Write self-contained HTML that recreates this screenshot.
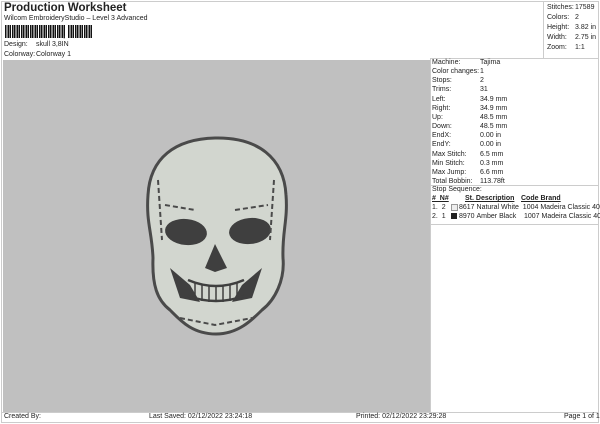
<!DOCTYPE html>
<html><head><style>
body{margin:0;width:600px;height:424px;background:#fff;font-family:"Liberation Sans",sans-serif;position:relative;overflow:hidden;color:#222}
.a{position:absolute;font-size:7px;white-space:nowrap}
.bd{position:absolute;border:1px solid #ccc}
</style></head><body>
<div class="bd" style="left:1px;top:1px;width:596px;height:420px"></div>
<div class="a" style="left:4px;top:2px;font-size:11.5px;font-weight:bold">Production Worksheet</div>
<div class="a" style="left:4px;top:15px">Wilcom EmbroideryStudio – Level 3 Advanced</div>
<div style="position:absolute;left:5px;top:25px;width:60px;height:13px;background:repeating-linear-gradient(90deg,#111 0 1.5px,#fff 1.5px 2.5px,#111 2.5px 4px,#fff 4px 4.5px)"></div>
<div class="a" style="left:63px;top:29px;font-weight:bold;font-size:9px">,</div>
<div style="position:absolute;left:68px;top:25px;width:25px;height:13px;background:repeating-linear-gradient(90deg,#111 0 1.5px,#fff 1.5px 2.5px,#111 2.5px 4px,#fff 4px 4.5px)"></div>
<div class="a" style="left:4px;top:41px">Design:</div><div class="a" style="left:36px;top:41px">skull 3,8IN</div>
<div class="a" style="left:4px;top:51px">Colorway:</div><div class="a" style="left:36px;top:51px">Colorway 1</div>
<div class="bd" style="left:543px;top:1px;width:54px;height:57px;border-top:none;border-right:none"></div>
<div class="a" style="left:547px;top:3px;line-height:10px">Stitches:<br>Colors:<br>Height:<br>Width:<br>Zoom:</div>
<div class="a" style="left:575px;top:3px;line-height:10px">17589<br>2<br>3.82 in<br>2.75 in<br>1:1</div>
<div style="position:absolute;left:3px;top:60px;width:427px;height:353px;background:#c0c0c0"></div>
<div class="bd" style="left:430px;top:58px;width:167px;height:355px;border-right:none;border-bottom:none"></div>
<div class="a" style="left:432px;top:58px;line-height:9.15px">Machine:<br>Color changes:<br>Stops:<br>Trims:<br>Left:<br>Right:<br>Up:<br>Down:<br>EndX:<br>EndY:<br>Max Stitch:<br>Min Stitch:<br>Max Jump:<br>Total Bobbin:</div>
<div class="a" style="left:480px;top:58px;line-height:9.15px">Tajima<br>1<br>2<br>31<br>34.9 mm<br>34.9 mm<br>48.5 mm<br>48.5 mm<br>0.00 in<br>0.00 in<br>6.5 mm<br>0.3 mm<br>6.6 mm<br>113.78ft</div>
<div style="position:absolute;left:430px;top:185px;width:168px;border-top:1px solid #ccc"></div>
<div class="a" style="left:432px;top:186px">Stop Sequence:</div>
<div class="a" style="left:432px;top:195px;font-weight:bold;text-decoration:underline">#&nbsp;&nbsp;N#</div>
<div class="a" style="left:465px;top:195px;font-weight:bold;text-decoration:underline">St.&nbsp;Description</div>
<div class="a" style="left:521px;top:195px;font-weight:bold;text-decoration:underline">Code&nbsp;Brand</div>
<div class="a" style="left:432px;top:204px">1.&nbsp;&nbsp;2</div><div style="position:absolute;left:451px;top:204px;width:5px;height:5px;border:1px solid #999;background:#eee"></div>
<div class="a" style="left:459px;top:204px">8617&nbsp;Natural White&nbsp;&nbsp;1004&nbsp;Madeira Classic 40</div>
<div class="a" style="left:432px;top:213px">2.&nbsp;&nbsp;1</div><div style="position:absolute;left:451px;top:213px;width:6px;height:6px;background:#222"></div>
<div class="a" style="left:459px;top:213px">8970&nbsp;Amber Black&nbsp;&nbsp;&nbsp;&nbsp;1007&nbsp;Madeira Classic 40</div>
<div style="position:absolute;left:430px;top:224px;width:168px;border-top:1px solid #ccc"></div>
<div style="position:absolute;left:1px;top:412px;width:597px;border-top:1px solid #ccc"></div>
<div class="a" style="left:4px;top:413px">Created By:</div>
<div class="a" style="left:149px;top:413px">Last Saved: 02/12/2022 23:24:18</div>
<div class="a" style="left:356px;top:413px">Printed: 02/12/2022 23:29:28</div>
<div class="a" style="left:564px;top:413px">Page 1 of 1</div>
<svg style="position:absolute;left:0;top:0" width="600" height="424">
<path d="M215 138 C258 137 284 158 286 195 C288 220 282 232 283 258 C285 280 275 300 262 310 C252 320 238 334 216 334 C192 334 180 320 170 310 C157 300 152 285 153 258 C152 232 146 222 148 195 C150 158 175 139 215 138Z" fill="#d2d6cf" stroke="#4a4a4a" stroke-width="3"/>
<ellipse cx="186" cy="232" rx="21" ry="13" fill="#3f3f3f" transform="rotate(6 186 232)"/>
<ellipse cx="250" cy="231" rx="21" ry="13" fill="#3f3f3f" transform="rotate(-6 250 231)"/>
<path d="M215 244 L205 268 L215 272 L227 268Z" fill="#3f3f3f"/>
<path d="M170 268 L180 298 L200 302 L190 285Z M262 268 L252 298 L232 302 L242 285Z" fill="#3f3f3f"/>
<path d="M188 280 Q216 292 244 280 M188 296 Q216 306 244 296" stroke="#3f3f3f" stroke-width="2.5" fill="none"/>
<path d="M195 282 V299 M202 284 V301 M209 285 V302 M216 285 V302 M223 285 V302 M230 284 V301 M237 282 V299" stroke="#3f3f3f" stroke-width="1.5"/>
<path d="M165 205 L195 210 M235 210 L268 205 M158 180 L162 240 M274 180 L270 240 M180 318 L215 325 L252 318" stroke="#4a4a4a" stroke-width="2" fill="none" stroke-dasharray="5 3"/>
</svg>
</body></html>
